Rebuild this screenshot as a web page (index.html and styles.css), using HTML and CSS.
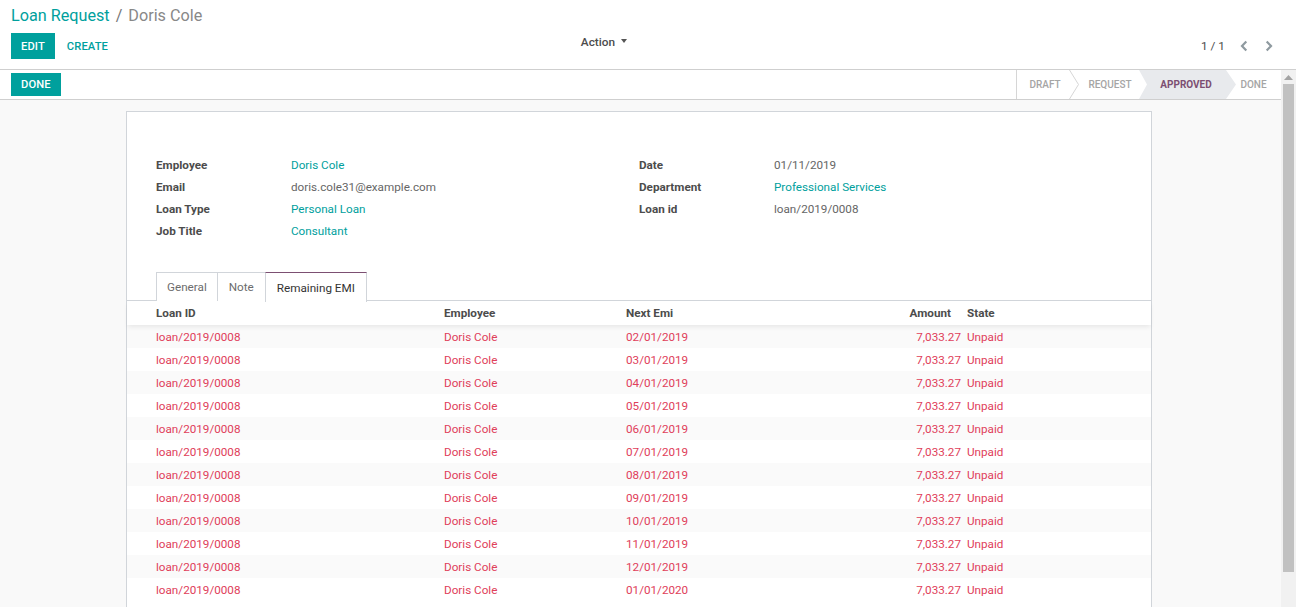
FILE: index.html
```html
<!DOCTYPE html>
<html>
<head>
<meta charset="utf-8">
<link rel="stylesheet" href="styles.css">
</head>
<body>
<div class="cp">
  <div class="breadcrumb"><span class="bc-link">Loan Request</span><span class="bc-sep">/</span><span class="bc-cur">Doris Cole</span></div>
  <div class="cp-row">
    <div class="cp-left">
      <div class="cp-buttons">
        <span class="btn btn-primary">EDIT</span>
        <span class="btn btn-link">CREATE</span>
      </div>
      <div class="cp-action">Action <span class="caret"></span></div>
    </div>
    <div class="cp-right">
      <div class="pager">
        <span class="pager-val">1 / 1</span>
        <span class="pager-btn"><svg width="8" height="12" viewBox="0 0 8 12"><path d="M6.3 1.5 L2 6 L6.3 10.5" fill="none" stroke="#8f9aa0" stroke-width="2.2"/></svg></span>
        <span class="pager-btn"><svg width="8" height="12" viewBox="0 0 8 12"><path d="M1.7 1.5 L6 6 L1.7 10.5" fill="none" stroke="#8f9aa0" stroke-width="2.2"/></svg></span>
      </div>
    </div>
  </div>
</div>
<div class="main">
  <div class="content">
    <div class="statusbar">
      <span class="btn btn-primary btn-done">DONE</span>
      <div class="steps">
        <div class="step step-draft">DRAFT</div>
        <svg class="step-sep" width="10" height="29" viewBox="0 0 10 29"><path d="M0.5 0 L9.5 14.5 L0.5 29" fill="none" stroke="#d6d6d6" stroke-width="1"/></svg>
        <div class="step step-request">REQUEST</div>
        <div class="step step-active">APPROVED</div>
        <div class="step step-done">DONE</div>
      </div>
    </div>
    <div class="sheet-bg">
      <div class="sheet">
        <div class="groups">
          <div class="group">
            <div class="lbl">Employee</div><div class="val link">Doris Cole</div>
            <div class="lbl">Email</div><div class="val">doris.cole31@example.com</div>
            <div class="lbl">Loan Type</div><div class="val link">Personal Loan</div>
            <div class="lbl">Job Title</div><div class="val link">Consultant</div>
          </div>
          <div class="group">
            <div class="lbl">Date</div><div class="val">01/11/2019</div>
            <div class="lbl">Department</div><div class="val link">Professional Services</div>
            <div class="lbl">Loan id</div><div class="val">loan/2019/0008</div>
          </div>
        </div>
        <div class="tabs">
          <div class="tab tab-first">General</div>
          <div class="tab">Note</div>
          <div class="tab tab-active">Remaining EMI</div>
        </div>
        <div class="list">
          <div class="row head">
            <div>Loan ID</div><div>Employee</div><div>Next Emi</div><div class="num num-head">Amount</div><div class="state">State</div>
          </div>
          <div class="row odd"><div>loan/2019/0008</div><div>Doris Cole</div><div>02/01/2019</div><div class="num">7,033.27</div><div class="state">Unpaid</div></div>
          <div class="row"><div>loan/2019/0008</div><div>Doris Cole</div><div>03/01/2019</div><div class="num">7,033.27</div><div class="state">Unpaid</div></div>
          <div class="row odd"><div>loan/2019/0008</div><div>Doris Cole</div><div>04/01/2019</div><div class="num">7,033.27</div><div class="state">Unpaid</div></div>
          <div class="row"><div>loan/2019/0008</div><div>Doris Cole</div><div>05/01/2019</div><div class="num">7,033.27</div><div class="state">Unpaid</div></div>
          <div class="row odd"><div>loan/2019/0008</div><div>Doris Cole</div><div>06/01/2019</div><div class="num">7,033.27</div><div class="state">Unpaid</div></div>
          <div class="row"><div>loan/2019/0008</div><div>Doris Cole</div><div>07/01/2019</div><div class="num">7,033.27</div><div class="state">Unpaid</div></div>
          <div class="row odd"><div>loan/2019/0008</div><div>Doris Cole</div><div>08/01/2019</div><div class="num">7,033.27</div><div class="state">Unpaid</div></div>
          <div class="row"><div>loan/2019/0008</div><div>Doris Cole</div><div>09/01/2019</div><div class="num">7,033.27</div><div class="state">Unpaid</div></div>
          <div class="row odd"><div>loan/2019/0008</div><div>Doris Cole</div><div>10/01/2019</div><div class="num">7,033.27</div><div class="state">Unpaid</div></div>
          <div class="row"><div>loan/2019/0008</div><div>Doris Cole</div><div>11/01/2019</div><div class="num">7,033.27</div><div class="state">Unpaid</div></div>
          <div class="row odd"><div>loan/2019/0008</div><div>Doris Cole</div><div>12/01/2019</div><div class="num">7,033.27</div><div class="state">Unpaid</div></div>
          <div class="row"><div>loan/2019/0008</div><div>Doris Cole</div><div>01/01/2020</div><div class="num">7,033.27</div><div class="state">Unpaid</div></div>
        </div>
      </div>
    </div>
  </div>
  <div class="scrollbar">
    <div class="sb-up"><svg width="9" height="5" viewBox="0 0 9 5"><path d="M0 5 L4.5 0 L9 5 Z" fill="#a3a3a3"/></svg></div>
    <div class="sb-thumb"></div>
  </div>
</div>
</body>
</html>
```
FILE: styles.css
```css
html, body {
  margin: 0;
  padding: 0;
  height: 100%;
  overflow: hidden;
}
body {
  font-family: Roboto, "Noto Sans", sans-serif;
  font-size: 11.7px;
  color: #4c4c4c;
  background: #fff;
  display: flex;
  flex-direction: column;
}
.cp {
  height: 70px;
  box-sizing: border-box;
  border-bottom: 1px solid #cfcfcf;
  padding: 4px 0 0 11px;
  flex: none;
}
.breadcrumb {
  font-size: 16.2px;
  line-height: 24px;
  height: 25px;
}
.bc-link { color: #00a09d; }
.bc-sep { color: #777; margin: 0 6px; }
.bc-cur { color: #888; }
.cp-row {
  display: flex;
  height: 30px;
  margin-top: 4px;
}
.cp-left {
  width: 637px;
  display: flex;
  justify-content: space-between;
}
.cp-buttons { display: flex; align-items: flex-start; }
.btn {
  display: inline-flex;
  align-items: center;
  height: 26px;
  padding: 0 10px;
  box-sizing: border-box;
  font-size: 11.2px;
  font-weight: 500;
  letter-spacing: 0.1px;
}
.btn-primary { background: #00a09d; color: #fff; }
.btn-link { color: #00a09d; margin-left: 2px; }
.cp-action {
  display: flex;
  align-items: center;
  height: 18px;
  padding-right: 21px;
  font-weight: 500;
  font-size: 11.8px;
  color: #4c4c4c;
}
.caret {
  display: inline-block;
  margin-left: 6px;
  width: 0;
  height: 0;
  border-left: 3.5px solid transparent;
  border-right: 3.5px solid transparent;
  border-top: 4px solid #555;
  margin-top: -2px;
}
.cp-right {
  flex: 1;
  display: flex;
  justify-content: flex-end;
  padding-right: 15px;
}
.pager {
  display: flex;
  align-items: center;
  height: 26px;
}
.pager-val { color: #4c4c4c; margin-right: 6px; font-size: 11.8px; }
.pager-btn {
  width: 25px;
  display: flex;
  justify-content: center;
  align-items: center;
}

.main {
  flex: 1;
  display: flex;
  min-height: 0;
}
.content {
  flex: 1;
  display: flex;
  flex-direction: column;
  min-width: 0;
}
.statusbar {
  height: 30px;
  box-sizing: border-box;
  border-bottom: 1px solid #cfcfcf;
  display: flex;
  justify-content: space-between;
  align-items: flex-start;
  padding-left: 11px;
  flex: none;
}
.btn-done {
  height: 23px;
  margin-top: 3px;
  padding: 0 10px;
}
.steps {
  display: flex;
  height: 29px;
  border-left: 1px solid #d6d6d6;
}
.step {
  display: flex;
  align-items: center;
  justify-content: center;
  font-size: 10px;
  font-weight: 500;
  color: #a5a5a5;
  height: 29px;
  box-sizing: border-box;
}
.step-draft { width: 52px; padding-left: 4px; }
.step-request { width: 60px; padding-left: 2px; }
.step-active {
  width: 97px;
  background: #e8eaed;
  color: #7c4f72;
  font-weight: 700;
  clip-path: polygon(0 0, calc(100% - 10px) 0, 100% 50%, calc(100% - 10px) 100%, 0 100%, 8px 50%);
  padding-left: 0;
  padding-right: 3px;
}
.step-done {
  width: 45px;
  padding-right: 10px;
}
.sheet-bg {
  flex: 1;
  background: #f9f9f9;
  padding-top: 11px;
  min-height: 0;
}
.sheet {
  width: 1026px;
  margin-left: 126px;
  box-sizing: border-box;
  background: #fff;
  border: 1px solid #d1d5da;
  border-bottom: none;
  height: 100%;
  padding-top: 42px;
}
.groups {
  display: flex;
  padding: 0 29px;
}
.group {
  width: 483px;
  display: grid;
  grid-template-columns: 135px 1fr;
  grid-auto-rows: 22px;
  align-items: center;
  align-content: start;
}
.lbl { font-weight: 700; color: #4c4c4c; }
.val { color: #666; }
.link { color: #00a09d; }
.tabs {
  display: flex;
  margin-top: 30px;
  padding-left: 29px;
  border-bottom: 1px solid #d1d5da;
  height: 29px;
  box-sizing: border-box;
}
.tab {
  height: 29px;
  box-sizing: border-box;
  padding: 0 11px;
  display: flex;
  align-items: center;
  color: #6c6c6c;
  border: 1px solid #d1d5da;
  border-bottom: none;
  margin-right: -1px;
  background: #fff;
}
.tab-first { padding: 0 10px; }
.tab-active {
  color: #333;
  border-top-color: #7c4f72;
  height: 30px;
  margin-bottom: -1px;
}
.row {
  display: grid;
  grid-template-columns: 288px 182px 160px 175px 1fr;
  padding-left: 29px;
  height: 23px;
  align-items: center;
  color: #e0405a;
}
.row.head {
  height: 24px;
  color: #4c4c4c;
  font-weight: 700;
  position: relative;
  box-shadow: 0 3px 5px -1px rgba(0, 0, 0, 0.08);
}
.row.odd { background: #fafafa; }
.num { text-align: right; }
.num-head { padding-right: 10px; }
.state { padding-left: 6px; }

.scrollbar {
  width: 15px;
  flex: none;
  background: #f1f1f1;
  display: flex;
  flex-direction: column;
  align-items: center;
}
.sb-up {
  height: 14px;
  display: flex;
  align-items: center;
  justify-content: center;
  width: 100%;
}
.sb-thumb {
  width: 11px;
  height: 488px;
  background: #c1c1c1;
}
```
